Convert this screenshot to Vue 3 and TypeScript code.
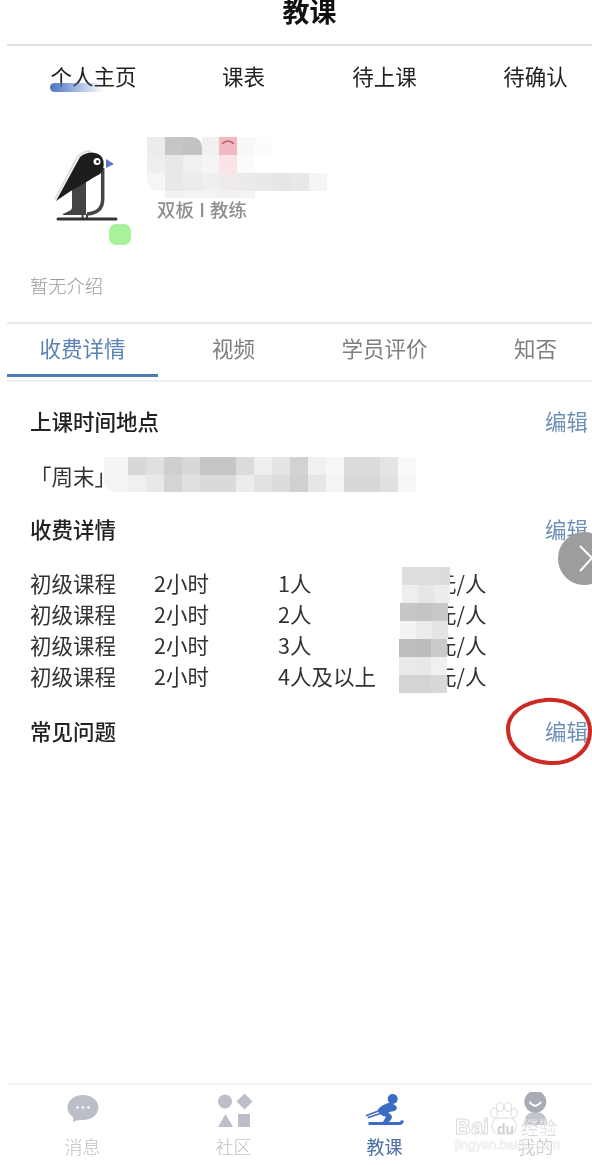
<script setup lang="ts">
const topTabs = ['个人主页', '课表', '待上课', '待确认'];
const detailTabs = ['收费详情', '视频', '学员评价', '知否'];

const prices = [
  { level: '初级课程', time: '2小时', people: '1人' },
  { level: '初级课程', time: '2小时', people: '2人' },
  { level: '初级课程', time: '2小时', people: '3人' },
  { level: '初级课程', time: '2小时', people: '4人及以上' }
];

// pixelated name: [width, colour]
const nameBlur: [number, string][][] = [
  [[18, '#ececec'], [18, '#c6c6c6'], [19, '#c2c2c2'], [17, '#f0f0f0'], [18, '#f2b9c3'], [18, '#f8f8f8'], [18, '#fcfcfc']],
  [[18, '#eeeeee'], [18, '#e8e8e8'], [19, '#f0f0f0'], [17, '#f5f5f5'], [18, '#fbe4e8'], [18, '#fbfbfb']],
  [[18, '#f6f6f6'], [18, '#e8e8e8'], [19, '#ececec'], [17, '#efefef'], [18, '#f0eaeb'], [18, '#ebebeb'], [18, '#e9e9e9'], [18, '#e6e6e6'], [18, '#e8e8e8'], [18, '#f5f5f5']],
  [[18, '#ffffff'], [18, '#f2f2f2'], [19, '#f4f4f4'], [17, '#f4f4f4'], [18, '#f2f2f2'], [18, '#f4f4f4']]
];

const addressBlur: [number, string][][] = [
  [[24, '#f5f5f5'], [18, '#d8d8d8'], [18, '#e0e0e0'], [18, '#cfcfcf'], [18, '#d8d8d8'], [36, '#c6c6c6'], [18, '#dcdcdc'], [18, '#eeeeee'], [18, '#e4e4e4'], [18, '#d2d2d2'], [18, '#f0f0f0'], [18, '#f7f7f7'], [36, '#dcdcdc'], [18, '#e4e4e4'], [18, '#f9f9f9']],
  [[24, '#f4f4f4'], [18, '#f0f0f0'], [18, '#e8e8e8'], [18, '#d4d4d4'], [18, '#e0e0e0'], [36, '#dadada'], [18, '#ececec'], [18, '#e2e2e2'], [18, '#dcdcdc'], [18, '#d0d0d0'], [18, '#e6e6e6'], [18, '#f4f4f4'], [36, '#d8d8d8'], [18, '#e0e0e0'], [18, '#f7f7f7']]
];

const priceBlur: { pad: number; cells: string[] }[] = [
  { pad: 3, cells: ['#dedede', '#dedede', '#dcdcdc'] },
  { pad: 3, cells: ['#eeeeee', '#e6e6e6', '#ededed'] },
  { pad: 1, cells: ['#c6c6c6', '#c4c4c4', '#c8c8c8'] },
  { pad: 1, cells: ['#f3f3f3', '#ececec', '#e4e4e4'] },
  { pad: 0, cells: ['#bdbdbd', '#bbbbbb', '#cacaca'] },
  { pad: 0, cells: ['#eaeaea', '#e8e8e8', '#f0f0f0'] },
  { pad: 0, cells: ['#d4d4d4', '#d4d4d4', '#d8d8d8'] }
];
</script>

<template>
  <div class="page">
    <header class="title-bar">
      <h1>教课</h1>
    </header>

    <nav class="top-tabs">
      <span v-for="tab in topTabs" :key="tab" class="top-tab">{{ tab }}</span>
      <i class="top-marker"></i>
    </nav>

    <section class="profile">
      <div class="profile-row">
        <div class="avatar">
          <svg width="105" height="120" viewBox="30 130 105 120">
            <path d="M55 199L78 156Q84 151 91 151" fill="none" stroke="#dedede" stroke-width="2" />
            <path d="M72 190V207Q72 210 69 211L63 214Q62 215 64 215H86V180Z" fill="#444" />
            <path d="M102.700 168V199Q102.700 213 87 214" fill="none" stroke="#444" stroke-width="3.500" />
            <path d="M56 201L80 157Q85 152.500 92 152.500Q102 153 103.500 161Q104.500 170 100 174Q92 178 85 183L70 191.500Z" fill="#1d1d1d" />
            <circle cx="97" cy="161.500" r="3.500" fill="#fff" />
            <circle cx="97.500" cy="161.500" r="1.500" fill="#1d1d1d" />
            <polygon points="106,159 114,164 106,168" fill="#5b78c8" />
            <path d="M82.500 214V219M87 214V219" stroke="#444" stroke-width="2" />
            <path d="M58 219H116" stroke="#333" stroke-width="3" stroke-linecap="round" />
          </svg>
          <i class="badge"></i>
        </div>
        <div class="who">
          <div class="name-blur">
            <div v-for="(row, r) in nameBlur" :key="r" class="blur-row" :class="'name-row-' + r">
              <i
                v-for="(cell, c) in row"
                :key="c"
                :style="{ width: cell[0] + 'px', background: cell[1] }"
              ></i>
            </div>
            <svg class="pink-arc" width="18" height="8" viewBox="0 0 18 8">
              <path d="M3 6Q9 0 15 6" fill="none" stroke="#b4626f" stroke-width="1.500" />
            </svg>
          </div>
          <p class="role">双板 I 教练</p>
        </div>
      </div>
      <p class="intro">暂无介绍</p>
    </section>

    <nav class="detail-tabs">
      <span
        v-for="(tab, i) in detailTabs"
        :key="tab"
        class="detail-tab"
        :class="{ active: i === 0 }"
      >{{ tab }}</span>
    </nav>

    <main class="content">
      <div class="head first">
        <h2>上课时间地点</h2>
        <a class="edit">编辑</a>
      </div>
      <div class="address">
        「周末」
        <div class="address-blur">
          <div v-for="(row, r) in addressBlur" :key="r" class="blur-row">
            <i
              v-for="(cell, c) in row"
              :key="c"
              :style="{ width: cell[0] + 'px', background: cell[1] }"
            ></i>
          </div>
        </div>
      </div>

      <div class="head second">
        <h2>收费详情</h2>
        <a class="edit">编辑</a>
      </div>
      <div class="price-table">
        <div v-for="(item, i) in prices" :key="i" class="price-row">
          <span>{{ item.level }}</span>
          <span>{{ item.time }}</span>
          <span>{{ item.people }}</span>
          <span>元/人</span>
        </div>
        <div class="price-blur">
          <div
            v-for="(row, r) in priceBlur"
            :key="r"
            class="price-blur-row"
            :style="{ paddingLeft: row.pad + 'px' }"
          >
            <i v-for="(color, c) in row.cells" :key="c" :style="{ background: color }"></i>
          </div>
        </div>
      </div>

      <div class="head third">
        <h2>常见问题</h2>
        <a class="edit">编辑</a>
        <svg class="red-ring" width="88" height="70" viewBox="0 0 88 70">
          <path
            d="M40 3C62 1 86 12 86 34C86 56 66 67 46 66C24 65 4 52 4 32C4 16 20 5 42 3"
            fill="none"
            stroke="#cc2a22"
            stroke-width="4"
          />
        </svg>
      </div>
    </main>

    <footer class="bottom-nav">
      <div class="nav-item">
        <svg width="40" height="40" viewBox="0 0 40 40">
          <path d="M20 3C28.500 3 35.500 8.500 35.500 15.500C35.500 22.500 28.500 28 20 28C17 28 14 28 10 30C10 28 10.500 26 10 25C6.500 23 4.500 19.500 4.500 15.500C4.500 8.500 11.500 3 20 3Z" fill="#bcbfca" />
          <circle cx="14.500" cy="15.500" r="1.300" fill="#fff" />
          <circle cx="20" cy="15.500" r="1.300" fill="#fff" />
          <circle cx="25.500" cy="15.500" r="1.300" fill="#fff" />
        </svg>
        <span>消息</span>
      </div>
      <div class="nav-item">
        <svg width="40" height="40" viewBox="0 0 40 40">
          <circle cx="11" cy="9.500" r="7" fill="#bcbfca" />
          <polygon points="30.500,1.500 38.500,9.500 30.500,17.500 22.500,9.500" fill="#bcbfca" />
          <polygon points="4,35 19,35 11.500,22" fill="#bcbfca" />
          <rect x="24" y="22" width="12" height="13" fill="#bcbfca" />
        </svg>
        <span>社区</span>
      </div>
      <div class="nav-item current">
        <svg width="40" height="40" viewBox="0 0 40 40">
          <circle cx="27.700" cy="7" r="5" fill="#3b6cc4" />
          <path d="M25.300 10.300L31 13.700Q33.300 17 29.300 19L23.300 20.300L26.700 23.700Q27.700 26.300 24.300 29.700L17.700 30.300L21 24.700Q14.300 23.700 12.700 18Q16 13 25.300 10.300Z" fill="#3b6cc4" />
          <path d="M1 23.700L16 18M2.700 25.700L16 21.300" stroke="#3b6cc4" stroke-width="1.500" />
          <path d="M3.500 31.500H34Q37 31.500 37.500 28.500" fill="none" stroke="#3b6cc4" stroke-width="3" />
        </svg>
        <span>教课</span>
      </div>
      <div class="nav-item">
        <svg width="40" height="40" viewBox="0 0 40 40">
          <path d="M8 33Q8 20 19.500 20Q31 20 31 33Z" fill="#c2c4cb" />
          <circle cx="19.300" cy="9.700" r="11" fill="#a9acb5" />
          <path d="M13.500 10Q19.300 17.500 25 10" fill="none" stroke="#fff" stroke-width="2" />
        </svg>
        <span>我的</span>
      </div>
    </footer>

    <div class="scroll-next">
      <svg width="34" height="53" viewBox="0 0 34 53">
        <path d="M22 14L34 26L22 39" fill="none" stroke="#fff" stroke-width="2" />
      </svg>
    </div>

    <div class="watermark">
      <svg class="paw" width="30" height="34" viewBox="0 0 30 34">
        <g fill="#fff" stroke="#dcdcdc" stroke-width="1">
          <ellipse cx="5" cy="11" rx="3.500" ry="5" />
          <ellipse cx="11" cy="5" rx="3.500" ry="4.500" />
          <ellipse cx="19" cy="5" rx="3.500" ry="4.500" />
          <ellipse cx="25" cy="11" rx="3" ry="5" />
          <rect x="3" y="16" width="24" height="16" rx="7" />
        </g>
      </svg>
      <span class="wm-bai">Bai</span>
      <span class="wm-du">du</span>
      <span class="wm-jy">经验</span>
      <span class="wm-url">jingyan.baidu.com</span>
    </div>
  </div>
</template>

<style scoped>
.page {
  position: relative;
  display: flex;
  flex-direction: column;
  width: 592px;
  height: 1165px;
  overflow: hidden;
  background: #fff;
  color: #333;
  font-family: "Noto Sans CJK SC", "Liberation Sans", sans-serif;
  font-size: 21.5px;
  filter: blur(0.35px);
}

h1, h2, p {
  margin: 0;
  font: inherit;
}

i {
  display: block;
}

.title-bar {
  height: 44px;
  margin-left: 7px;
  padding-left: 20px;
  border-bottom: 2px solid #e2e2e2;
  text-align: center;
}

.title-bar h1 {
  font-size: 27px;
  font-weight: 700;
  line-height: 22px;
  color: #111;
}

.top-tabs {
  position: relative;
  display: grid;
  grid-template-columns: repeat(4, 151px);
  height: 62px;
  margin-left: 7px;
}

.top-tab {
  line-height: 60px;
  text-align: center;
  color: #222;
}

.top-tab:first-child {
  padding-left: 22px;
}

.top-tab:nth-child(2) {
  padding-left: 20px;
}

.top-marker {
  position: absolute;
  left: 43px;
  top: 37px;
  width: 54px;
  height: 9px;
  border-radius: 5px;
  background: linear-gradient(90deg, #4a74c4, rgba(74, 116, 196, 0));
}

.profile {
  height: 214px;
  padding: 22px 0 0 30px;
  box-sizing: border-box;
}

.profile-row {
  display: flex;
}

.avatar {
  position: relative;
  width: 105px;
  height: 120px;
}

.badge {
  position: absolute;
  right: 4px;
  bottom: 5px;
  width: 22px;
  height: 21px;
  border-radius: 7px;
  background: #a8f29c;
}

.who {
  margin: 7px 0 0 12px;
}

.name-blur {
  position: relative;
  height: 61px;
}

.blur-row {
  display: flex;
}

.blur-row i {
  height: 18px;
}

.name-row-0 i:nth-child(3) {
  border-top-right-radius: 10px;
}

.name-row-2 i:first-child {
  border-bottom-left-radius: 12px;
}

.name-row-3 i {
  height: 7px;
}

.pink-arc {
  position: absolute;
  left: 72px;
  top: 1px;
}

.role {
  margin-left: 10px;
  font-size: 18.5px;
  font-weight: 500;
  line-height: 22px;
  color: #8f8f8f;
  word-spacing: 1px;
}

.intro {
  margin: 24px 0 0 0;
  font-size: 18.3px;
  font-weight: 300;
  line-height: 22px;
  color: #999;
}

.detail-tabs {
  display: grid;
  grid-template-columns: repeat(4, 151px);
  height: 60px;
  margin-left: 7px;
  box-sizing: border-box;
  border-top: 2px solid #e9e9e9;
  border-bottom: 2px solid #eeeeee;
}

.detail-tab {
  height: 53px;
  box-sizing: border-box;
  line-height: 48px;
  text-align: center;
  color: #7f7f7f;
}

.detail-tab.active {
  color: #5b82b5;
  border-bottom: 3px solid #4f79b4;
}

.content {
  flex: 1;
}

.head {
  position: relative;
  display: flex;
  justify-content: space-between;
  padding: 0 4px 0 30px;
  line-height: 30px;
}

.head h2 {
  font-weight: 500;
  color: #222;
}

.head.first {
  margin-top: 24px;
}

.head.second {
  margin-top: 23px;
}

.head.third {
  margin-top: 25px;
}

.edit {
  color: #6d8fb8;
}

.address {
  position: relative;
  margin-top: 25px;
  padding-left: 30px;
  line-height: 30px;
}

.address-blur {
  position: absolute;
  left: 104px;
  top: -4px;
}

.address-blur .blur-row i {
  height: 17.5px;
}

.address-blur .blur-row:last-child i:first-child {
  border-bottom-left-radius: 12px;
}

.price-table {
  position: relative;
  margin-top: 23px;
  padding-left: 30px;
}

.price-row {
  display: grid;
  grid-template-columns: 124px 124px 157px auto;
  line-height: 31px;
  color: #333;
}

.price-blur {
  position: absolute;
  left: 399px;
  top: 0;
}

.price-blur-row {
  display: flex;
}

.price-blur-row i {
  width: 16px;
  height: 18px;
}

.red-ring {
  position: absolute;
  left: 504px;
  top: -19px;
}

.bottom-nav {
  display: grid;
  grid-template-columns: repeat(4, 151px);
  height: 82px;
  margin-left: 7px;
  box-sizing: border-box;
  padding-top: 7px;
  border-top: 2px solid #f3f3f3;
}

.nav-item {
  display: flex;
  flex-direction: column;
  align-items: center;
  gap: 2px;
  font-size: 18px;
  line-height: 24px;
  font-weight: 300;
  color: #c0c0c0;
}

.nav-item.current {
  color: #4a6ea8;
  font-weight: 400;
}

.scroll-next {
  position: absolute;
  left: 558px;
  top: 532px;
  width: 52px;
  height: 53px;
  border-radius: 50%;
  background: #9d9d9d;
}

.scroll-next svg {
  display: block;
}

.watermark {
  position: absolute;
  left: 450px;
  top: 1100px;
  width: 112px;
  height: 60px;
  pointer-events: none;
  font-family: "Liberation Sans", sans-serif;
  color: rgba(255, 255, 255, 0.8);
  -webkit-text-stroke: 1px #dcdcdc;
}

.watermark span {
  position: absolute;
  white-space: nowrap;
}

.paw {
  position: absolute;
  left: 39px;
  top: 2px;
}

.wm-bai {
  left: 5px;
  top: 15px;
  font-size: 22px;
  font-weight: 700;
  line-height: 24px;
}

.wm-du {
  left: 47px;
  top: 21px;
  font-size: 14px;
  font-weight: 700;
  line-height: 16px;
  color: #d0d0d0;
  -webkit-text-stroke: 0;
}

.wm-jy {
  left: 71px;
  top: 16px;
  font-family: "Noto Sans CJK SC", sans-serif;
  font-size: 18px;
  line-height: 22px;
  color: rgba(180, 180, 180, 0.7);
  -webkit-text-stroke: 0.5px #fff;
}

.wm-url {
  left: 5px;
  top: 37px;
  font-size: 13px;
  line-height: 16px;
  color: rgba(255, 255, 255, 0.6);
  -webkit-text-stroke: 0.5px #e6e6e6;
}
</style>
